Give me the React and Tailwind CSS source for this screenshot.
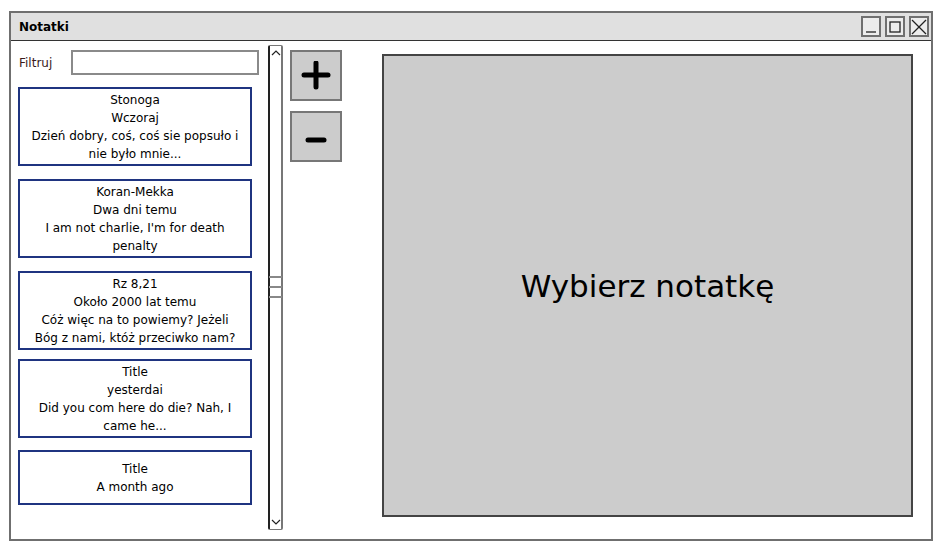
import React from "react";

const font = { fontFamily: '"Comic Sans MS", "DejaVu Sans", sans-serif' };

function Card({ lines, className = "" }) {
  return (
    <div
      className={`w-[234px] border-2 border-[#1f3480] bg-white flex flex-col items-center justify-center text-[12px] leading-[18px] text-black ${className}`}
    >
      {lines.map((l, i) => (
        <div key={i}>{l}</div>
      ))}
    </div>
  );
}

export default function App() {
  return (
    <div className="w-[949px] h-[548px] bg-white relative overflow-hidden" style={font}>
      <div className="ml-[9px] mt-[11px] w-[924px] h-[530px] border-2 border-[#6f6f6f] flex flex-col">
        {/* title bar */}
        <div className="h-[28px] bg-[#e0e0e0] border-b border-[#333] flex items-center justify-between pl-[8px] pr-[2px]">
          <span className="text-[12px] font-bold text-black">Notatki</span>
          <div className="flex gap-[4px]">
            <div className="w-[20px] h-[21px] border-2 border-[#6f6f6f] bg-[#ececec] flex items-center justify-center">
              <svg width="14" height="14" viewBox="0 0 14 14">
                <line x1="2" y1="12" x2="12" y2="12" stroke="#222" strokeWidth="1.3" />
              </svg>
            </div>
            <div className="w-[20px] h-[21px] border-2 border-[#6f6f6f] bg-[#ececec] flex items-center justify-center">
              <svg width="14" height="14" viewBox="0 0 14 14">
                <rect x="2" y="2" width="10" height="10" fill="none" stroke="#222" strokeWidth="1.3" />
              </svg>
            </div>
            <div className="w-[20px] h-[21px] border-2 border-[#6f6f6f] bg-[#ececec] flex items-center justify-center">
              <svg width="16" height="16" viewBox="0 0 16 16">
                <line x1="1" y1="1" x2="15" y2="15" stroke="#222" strokeWidth="1.2" />
                <line x1="15" y1="1" x2="1" y2="15" stroke="#222" strokeWidth="1.2" />
              </svg>
            </div>
          </div>
        </div>
        {/* body */}
        <div className="flex items-start flex-1">
          {/* left column */}
          <div className="ml-[7px] mt-[9px] w-[241px] flex flex-col">
            <div className="flex items-center h-[25px]">
              <span className="w-[53px] pl-[1px] text-[12px] text-[#3a1a1a]">Filtruj</span>
              <div className="w-[188px] h-[25px] border-2 border-[#8a8a8a] bg-white" />
            </div>
            <Card
              className="mt-[12px] h-[79px]"
              lines={["Stonoga", "Wczoraj", "Dzień dobry, coś, coś sie popsuło i", "nie było mnie..."]}
            />
            <Card
              className="mt-[13px] h-[79px]"
              lines={["Koran-Mekka", "Dwa dni temu", "I am not charlie, I'm for death", "penalty"]}
            />
            <Card
              className="mt-[13px] h-[79px]"
              lines={["Rz 8,21", "Około 2000 lat temu", "Cóż więc na to powiemy? Jeżeli", "Bóg z nami, któż przeciwko nam?"]}
            />
            <Card
              className="mt-[9px] h-[79px]"
              lines={["Title", "yesterdai", "Did you com here do die? Nah, I", "came he..."]}
            />
            <Card className="mt-[12px] h-[55px]" lines={["Title", "A month ago"]} />
          </div>
          {/* scrollbar */}
          <div className="ml-[9px] mt-[4px] w-[15px] h-[485px] border-l-2 border-l-[#222] border-r-2 border-r-[#777] border-y border-y-[#777] rounded-[2px] flex flex-col items-center justify-between py-[3px]">
            <svg width="10" height="8" viewBox="0 0 10 8">
              <polyline points="1,6 5,2 9,6" fill="none" stroke="#222" strokeWidth="1.2" />
            </svg>
            <div className="w-[13px] flex flex-col gap-[8px] -mt-[2px]">
              <div className="h-[2px] bg-[#888]" />
              <div className="h-[2px] bg-[#888]" />
              <div className="h-[2px] bg-[#888]" />
            </div>
            <svg width="10" height="8" viewBox="0 0 10 8">
              <polyline points="1,2 5,6 9,2" fill="none" stroke="#222" strokeWidth="1.2" />
            </svg>
          </div>
          {/* buttons */}
          <div className="ml-[7px] mt-[9px] flex flex-col gap-[10px]">
            <div className="w-[52px] h-[51px] bg-[#cccccc] border-2 border-[#777] flex items-center justify-center">
              <svg width="30" height="30" viewBox="0 0 30 30">
                <line x1="3" y1="14" x2="27" y2="14" stroke="#000" strokeWidth="5" strokeLinecap="round" />
                <line x1="15" y1="2" x2="15" y2="26" stroke="#000" strokeWidth="5" strokeLinecap="round" />
              </svg>
            </div>
            <div className="w-[52px] h-[51px] bg-[#cccccc] border-2 border-[#777] flex items-center justify-center">
              <svg width="30" height="30" viewBox="0 0 30 30">
                <line x1="7" y1="18" x2="23" y2="18" stroke="#000" strokeWidth="5" strokeLinecap="round" />
              </svg>
            </div>
          </div>
          {/* main panel */}
          <div className="ml-[40px] mt-[13px] w-[531px] h-[463px] bg-[#cccccc] border-2 border-[#444] flex items-center justify-center">
            <span className="text-[31px] text-black mt-[2px]">Wybierz notatkę</span>
          </div>
        </div>
      </div>
    </div>
  );
}
